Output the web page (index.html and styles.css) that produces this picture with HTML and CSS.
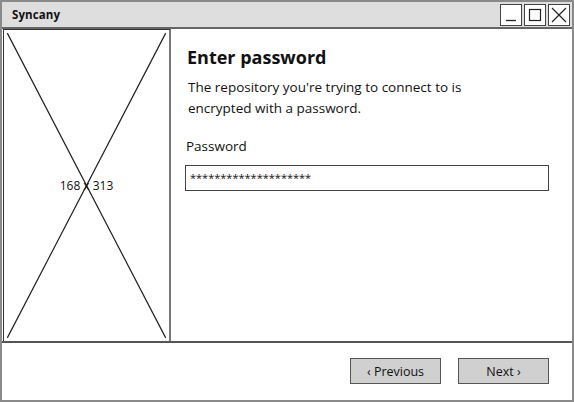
FILE: index.html
```html
<!DOCTYPE html>
<html>
<head>
<meta charset="utf-8">
<link rel="stylesheet" href="styles.css">
</head>
<body>
<div class="window">
  <div class="titlebar">
    <span class="title">Syncany</span>
    <div class="winbtns">
      <div class="winbtn"><svg width="20" height="20" viewBox="0 0 20 20"><path d="M5 15.5H15" stroke="#222" stroke-width="1.3"/></svg></div>
      <div class="winbtn"><svg width="20" height="20" viewBox="0 0 20 20"><rect x="4.5" y="4.5" width="11" height="11" fill="none" stroke="#222" stroke-width="1.2"/></svg></div>
      <div class="winbtn"><svg width="20" height="20" viewBox="0 0 20 20"><path d="M3 3L17 17M17 3L3 17" stroke="#222" stroke-width="1.2"/></svg></div>
    </div>
  </div>
  <div class="main">
    <div class="placeholder">
      <svg class="cross" viewBox="0 0 100 100" preserveAspectRatio="none"><path d="M2 1L98 99M98 1L2 99" stroke="#222" stroke-width="1.2" vector-effect="non-scaling-stroke" fill="none"/></svg>
      <span class="dims">168 x 313</span>
    </div>
    <div class="content">
      <h1 class="heading">Enter password</h1>
      <p class="desc">The repository you're trying to connect to is encrypted with a password.</p>
      <div class="label">Password</div>
      <div class="input">********************</div>
    </div>
  </div>
  <div class="footer">
    <div class="btn">‹ Previous</div>
    <div class="btn">Next ›</div>
  </div>
</div>
</body>
</html>
```

FILE: styles.css
```css
* { box-sizing: border-box; }
html, body { margin: 0; padding: 0; background: #fff; }
body { font-family: "Open Sans", "DejaVu Sans", sans-serif; color: #111; }

.window {
  width: 574px;
  height: 402px;
  border: 2px solid #8a8a8a;
  display: flex;
  flex-direction: column;
}

.titlebar {
  height: 27px;
  background: #dedede;
  border-bottom: 2px solid #666;
  display: flex;
  align-items: center;
  justify-content: space-between;
  padding: 0 2px 0 10px;
  flex: none;
}
.title { font-weight: 700; font-size: 11.5px; letter-spacing: 0.1px; }
.winbtns { display: flex; gap: 2px; }
.winbtn {
  width: 22px;
  height: 22px;
  background: #fff;
  border: 1px solid #444;
  display: flex;
  align-items: center;
  justify-content: center;
}

.main {
  height: 314px;
  display: flex;
  flex: none;
  border-bottom: 2px solid #555;
}
.placeholder {
  position: relative;
  width: 168px;
  margin-left: 1px;
  border: 1.5px solid #333;
  border-right: 2px solid #777;
  border-bottom: none;
  display: flex;
  align-items: center;
  justify-content: center;
}
.cross { position: absolute; inset: 0; width: 100%; height: 100%; }
.dims { position: relative; font-size: 12px; }

.content { flex: 1; padding: 11px 23px 0 14px; }
.heading { margin: 0 0 0 2px; font-size: 18px; font-weight: 700; line-height: 34px; }
.desc { margin: 3px 0 0 3px; font-size: 13.5px; line-height: 21px; width: 300px; }
.label { margin: 17px 0 0 1px; font-size: 13.5px; line-height: 20px; }
.input {
  margin-top: 9px;
  height: 26px;
  border: 1.5px solid #444;
  font-size: 11px;
  padding: 5px 4px;
  line-height: 14px;
}

.footer {
  flex: 1;
  display: flex;
  justify-content: flex-end;
  align-items: flex-start;
  gap: 17px;
  padding: 15px 23px 0 0;
}
.btn {
  width: 91px;
  height: 26px;
  background: #d0d0d0;
  border: 1.5px solid #555;
  font-size: 12.5px;
  display: flex;
  align-items: center;
  justify-content: center;
}
```
